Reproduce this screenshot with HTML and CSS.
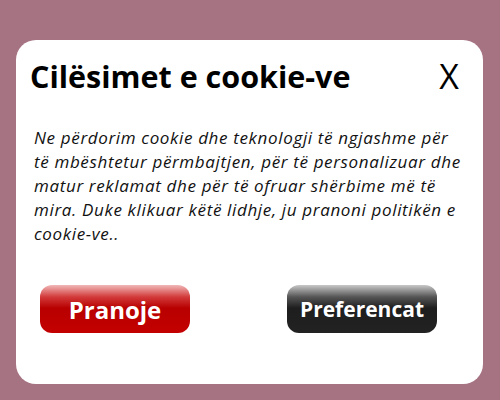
FILE: index.html
```html
<!DOCTYPE html>
<html lang="sq">
<head>
<meta charset="utf-8">
<link rel="stylesheet" href="styles.css">
</head>
<body>
<div class="card">
  <div class="head">
    <h1 class="title">Cilësimet e cookie-ve</h1>
    <span class="close">X</span>
  </div>
  <p class="text">Ne përdorim cookie dhe teknologji të ngjashme për të mbështetur përmbajtjen, për të personalizuar dhe matur reklamat dhe për të ofruar shërbime më të mira. Duke klikuar këtë lidhje, ju pranoni politikën e cookie-ve..</p>
  <div class="actions">
    <button class="btn btn-red">Pranoje</button>
    <button class="btn btn-dark">Preferencat</button>
  </div>
</div>
</body>
</html>
```
FILE: styles.css
```css
html, body {
  margin: 0;
  padding: 0;
}
body {
  width: 500px;
  height: 400px;
  background: #a67383;
  font-family: "Open Sans", sans-serif;
  padding: 40px 17px 16px 16px;
  box-sizing: border-box;
}
.card {
  background: #fff;
  border-radius: 20px;
  height: 344px;
  box-sizing: border-box;
  padding: 16px 17px 0 14px;
  display: flex;
  flex-direction: column;
}
.head {
  display: flex;
  justify-content: space-between;
  align-items: center;
  height: 40px;
  padding-right: 7px;
}
.title {
  margin: 0;
  font-size: 30.5px;
  line-height: 40px;
  font-weight: 700;
  color: #000;
}
.close {
  font-size: 34px;
  font-weight: 400;
  color: #000;
  line-height: 1;
}
.text {
  margin: 30px 0 0 4px;
  font-size: 17px;
  letter-spacing: 0.65px;
  line-height: 24px;
  font-style: italic;
  color: #111;
}
.actions {
  display: flex;
  justify-content: space-between;
  padding: 0 29px 0 10px;
  margin-top: 39px;
}
.btn {
  width: 150px;
  height: 48px;
  border: none;
  border-radius: 12px;
  font-family: "Open Sans", sans-serif;
  font-weight: 700;
  color: #fff;
  padding: 0;
}
.btn-red {
  font-size: 24px;
  background: linear-gradient(to bottom, #f0b8b8 0%, #d23a3a 25%, #b80000 48%, #c40000 100%);
}
.btn-dark {
  font-size: 21px;
  background: linear-gradient(to bottom, #c8c8c8 0%, #555 25%, #1e1e1e 48%, #222 100%);
}
```
